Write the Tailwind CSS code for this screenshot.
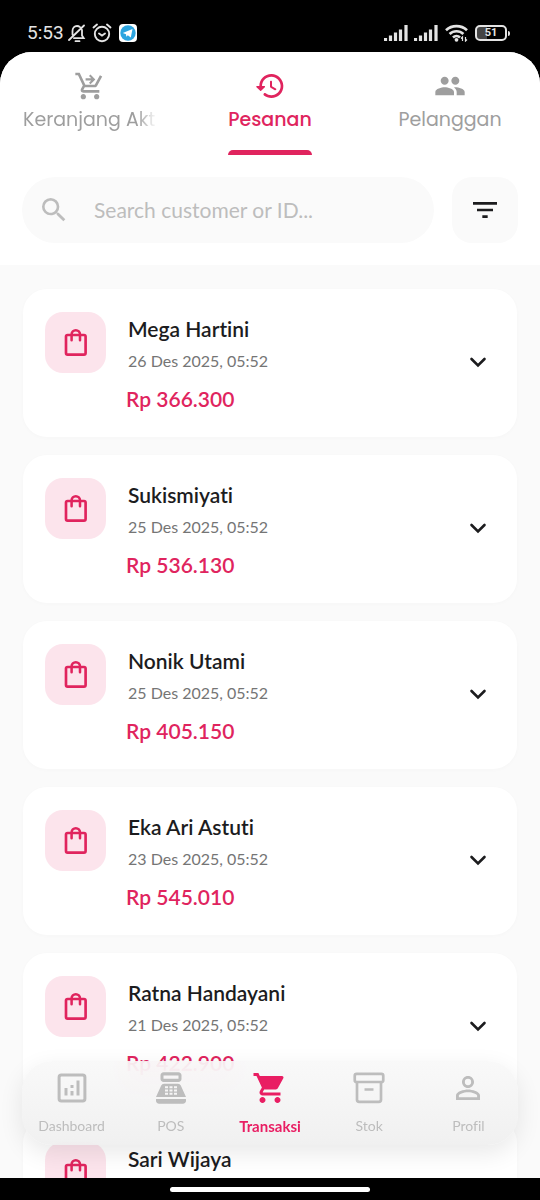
<!DOCTYPE html>
<html lang="id">
<head>
<meta charset="utf-8">
<meta name="viewport" content="width=device-width, initial-scale=1">
<title>Pesanan</title>
<script src="https://cdn.jsdelivr.net/npm/@tailwindcss/browser@4"></script>
</head>
<body class="flex h-screen flex-col bg-black font-['Lato',sans-serif] text-[#1c1c1e] [font-variant-ligatures:none]">

<!-- Icon library -->
<svg class="hidden" aria-hidden="true">
  <symbol id="i-bag" viewBox="0 0 24 24"><rect x="4.500" y="6" width="14.700" height="14.700" rx="1.200" fill="none" stroke="currentColor" stroke-width="2"/><path d="M8.700 10V5.600a3.150 3.150 0 0 1 6.300 0V10" fill="none" stroke="currentColor" stroke-width="1.900" stroke-linecap="round"/></symbol>
  <symbol id="i-chevron" viewBox="0 0 24 24"><path d="M5.500 9l6.500 6.500L18.500 9" fill="none" stroke="currentColor" stroke-width="2.600" stroke-linecap="round"/></symbol>
  <symbol id="i-signal" viewBox="0 0 24 16"><path d="M1.500 16v-3M6.500 16v-5.500M11.500 16V7.500M16.500 16V4.500M22 16V0" stroke="currentColor" stroke-width="3.200" fill="none"/></symbol>
</svg>

<!-- Status bar -->
<div class="flex h-[52px] shrink-0 items-center justify-between pt-[14px] pr-[30px] pl-[27px] text-[#e4e4e4]">
  <div class="flex items-center gap-1">
    <span class="font-['Roboto',sans-serif] text-[19px] leading-6">5:53</span>
    <svg class="size-[18px]" viewBox="0 0 18 18" fill="none" stroke="currentColor" stroke-width="1.800" stroke-linecap="round"><path d="M1 16L16 1.500M4.500 10.500V7c0-3 1.900-5 4.500-5 1.300 0 2.200.4 3 1.100M14 6v5.500l1.700 2.700H6M7.500 17.200h4"/></svg>
    <svg class="ml-[2px] size-5" viewBox="0 0 20 20" fill="none" stroke="currentColor" stroke-width="1.900" stroke-linecap="round"><circle cx="10" cy="11" r="7.200"/><path d="M1.500 4.500L5 1.500M18.500 4.500L15 1.500M7 10.500l3 2 3-2"/></svg>
    <svg class="ml-[3px] size-[18px]" viewBox="0 0 18 18"><rect width="18" height="18" rx="4" fill="#fff"/><circle cx="9" cy="9" r="7.700" fill="#2ca5e0"/><path d="M3.800 9l9.700-3.900-1.700 8.400-3-2.200-1.500 1.400-.3-2.500z" fill="#fff"/></svg>
  </div>
  <div class="flex items-center">
    <svg class="h-4 w-6"><use href="#i-signal"/></svg>
    <svg class="ml-[6px] h-4 w-6"><use href="#i-signal"/></svg>
    <svg class="ml-[7px] h-[18px] w-6" viewBox="0 0 24 18"><path d="M1 6.200a15.500 15.500 0 0 1 21 0M4.600 10a10 10 0 0 1 13.800 0M8 13.400a5.200 5.200 0 0 1 7 0" fill="none" stroke="currentColor" stroke-width="2.700"/><circle cx="11.500" cy="15.800" r="1.900" fill="currentColor"/><path d="M17.500 17v-4l-1.500 1.500M20.500 13v4l1.500-1.500" fill="none" stroke="currentColor" stroke-width="1.200"/></svg>
    <div class="ml-[6px] flex h-4 w-8 items-center justify-center rounded-[5px] border-2 border-current bg-linear-to-r from-[#444] from-35% to-black to-35% font-['Roboto',sans-serif] text-[11px] font-bold">51</div>
    <div class="ml-px h-[5px] w-[2px] rounded-r bg-current"></div>
  </div>
</div>

<div class="relative flex min-h-0 flex-1 flex-col overflow-hidden rounded-t-[32px] bg-[#fafafa]">

  <header class="shrink-0 bg-white pb-[22px]">
    <nav class="grid grid-cols-3 font-['Poppins','Inter',sans-serif] text-[19px] leading-7 text-[#9e9e9e]">
      <a href="#keranjang" class="flex h-[103px] flex-col items-center pt-[18px]">
        <svg class="size-8" viewBox="0 0 24 24" fill="currentColor"><path d="M11.250 9.600l1.100 1.100L16 7.050 12.350 3.400l-1.100 1.100 1.700 1.750H8.700v1.600h4.250zM7 18c-1.100 0-1.990.9-1.990 2S5.900 22 7 22s2-.9 2-2-.9-2-2-2zm10 0c-1.100 0-1.990.9-1.990 2s.89 2 1.990 2 2-.9 2-2-.9-2-2-2zm-1.450-5c.75 0 1.410-.41 1.750-1.030l3.860-7.010L19.420 4l-3.870 7H8.530L4.270 2H1v2h2l3.600 7.590-1.350 2.440C4.520 15.370 5.480 17 7 17h12v-2H7l1.100-2h7.450z"/></svg>
        <span class="mt-1 w-[134px] overflow-hidden mask-r-from-85% mask-r-to-100% whitespace-nowrap">Keranjang Aktif</span>
      </a>
      <a href="#pesanan" aria-current="page" class="flex h-[103px] flex-col items-center pt-[18px] text-[#e0245e]">
        <svg class="size-8" viewBox="0 0 24 24" fill="currentColor"><path d="M13.260 3C8.170 2.860 4 6.950 4 12H2.210c-.45 0-.67.540-.35.850l2.790 2.800c.2.200.51.200.71 0l2.790-2.800c.31-.31.090-.85-.36-.85H6c0-3.900 3.180-7.050 7.100-7 3.720.050 6.850 3.180 6.900 6.900.050 3.910-3.100 7.100-7 7.100-1.610 0-3.100-.55-4.280-1.480-.4-.31-.96-.28-1.320.080-.42.420-.39 1.130.080 1.490C9 20.290 10.910 21 13 21c5.050 0 9.140-4.170 9-9.260-.13-4.690-4.050-8.610-8.740-8.740zM12.750 8c-.41 0-.75.340-.75.750v3.680c0 .35.190.68.490.860l3.120 1.850c.36.210.82.090 1.030-.26.210-.36.090-.82-.26-1.030l-2.880-1.710v-3.400c0-.4-.34-.74-.75-.74z"/></svg>
        <span class="mt-1 font-medium">Pesanan</span>
        <span class="mt-auto h-[5px] w-[84px] rounded-t-full bg-current"></span>
      </a>
      <a href="#pelanggan" class="flex h-[103px] flex-col items-center pt-[18px]">
        <svg class="size-8" viewBox="0 0 24 24" fill="currentColor"><path d="M16 11c1.660 0 2.990-1.340 2.990-3S17.660 5 16 5s-3 1.340-3 3 1.340 3 3 3zm-8 0c1.660 0 2.990-1.340 2.990-3S9.660 5 8 5 5 6.340 5 8s1.340 3 3 3zm0 2c-2.330 0-7 1.170-7 3.500V19h14v-2.500c0-2.330-4.670-3.500-7-3.500zm8 0c-.29 0-.62.020-.97.050 1.160.840 1.970 1.970 1.970 3.450V19h6v-2.500c0-2.330-4.670-3.500-7-3.500z"/></svg>
        <span class="mt-1">Pelanggan</span>
      </a>
    </nav>
    <form class="mx-[22px] mt-[22px] flex gap-[18px]">
      <label class="flex h-[66px] flex-1 items-center rounded-full bg-[#fafafa] pl-4 text-[#bdbdbd]">
        <svg class="size-8 shrink-0" viewBox="0 0 24 24" fill="currentColor"><path d="M15.500 14h-.79l-.28-.27A6.471 6.471 0 0 0 16 9.500 6.500 6.500 0 1 0 9.500 16c1.610 0 3.090-.59 4.230-1.570l.27.280v.79l5 4.990L20.490 19l-4.990-5zm-6 0C7.010 14 5 11.990 5 9.500S7.010 5 9.500 5 14 7.010 14 9.500 11.990 14 9.500 14z"/></svg>
        <input type="search" aria-label="Search customer or ID" placeholder="Search customer or ID..." class="ml-6 min-w-0 flex-1 bg-transparent text-[21px] outline-none placeholder:text-[#bdbdbd]">
      </label>
      <button type="button" aria-label="Filter" class="flex h-[66px] w-[66px] items-center justify-center rounded-[20px] bg-[#fafafa]">
        <svg class="size-8" viewBox="0 0 24 24" fill="currentColor"><path d="M10 18h4v-2h-4v2zM3 6v2h18V6H3zm3 7h12v-2H6v2z"/></svg>
      </button>
    </form>
  </header>

  <main id="orders" class="flex min-h-0 flex-1 flex-col gap-[18px] overflow-hidden px-[23px] pt-6"></main>

  <!-- Floating bottom navigation -->
  <nav class="absolute inset-x-[22px] bottom-[33px] grid h-[84px] grid-cols-5 rounded-[30px] bg-linear-to-b from-[#f8f8f8]/85 to-[#eeeeee]/85 text-[14px] leading-5 text-[#bdbdbd] shadow-[0_8px_24px_rgba(0,0,0,0.09)] backdrop-blur-lg">
    <a href="#dashboard" class="flex flex-col items-center pt-[9px]">
      <svg class="size-9" viewBox="0 0 24 24" fill="none" stroke="currentColor" stroke-width="2"><rect x="3.400" y="3.400" width="17.200" height="17.200" rx="1.500"/><path d="M8 17v-5M12 17v-3M12 12v-2M16 17V7"/></svg>
      <span class="mt-[10px]">Dashboard</span>
    </a>
    <a href="#pos" class="flex flex-col items-center pt-[9px]">
      <svg class="size-9" viewBox="0 0 24 24" fill="currentColor"><path fill-rule="evenodd" d="M17 1.500H7c-1.100 0-2 .9-2 2V6c0 1.100.9 2 2 2h10c1.100 0 2-.9 2-2V3.500c0-1.100-.9-2-2-2zm0 4.300H7V3.600h10v2.200zm3 16.700H4c-1.100 0-2-.9-2-2v-1.200h20v1.200c0 1.100-.9 2-2 2zM18.530 10.400A2 2 0 0 0 16.700 9.200H7.300a2 2 0 0 0-1.830 1.200L2 18h20zM8 10.800h2v1.300H8zm3 0h2v1.300h-2zm3 0h2v1.300h-2zm-6 2.200h2v1.300H8zm3 0h2v1.300h-2zm3 0h2v1.300h-2zm-6 2.200h2v1.300H8zm3 0h2v1.300h-2zm3 0h2v1.300h-2z"/></svg>
      <span class="mt-[10px]">POS</span>
    </a>
    <a href="#transaksi" aria-current="page" class="flex flex-col items-center pt-[9px] text-[#e91e63]">
      <svg class="size-9" viewBox="0 0 24 24" fill="currentColor"><path d="M7 18c-1.100 0-1.990.9-1.990 2S5.900 22 7 22s2-.9 2-2-.9-2-2-2zM1 2v2h2l3.600 7.590-1.350 2.450c-.16.280-.25.610-.25.960 0 1.100.9 2 2 2h12v-2H7.420c-.14 0-.25-.11-.25-.25l.030-.12.900-1.630h7.450c.75 0 1.410-.41 1.750-1.030l3.580-6.490A1 1 0 0 0 20 4H5.210l-.94-2H1zm16 16c-1.100 0-1.990.9-1.990 2s.89 2 1.990 2 2-.9 2-2-.9-2-2-2z"/></svg>
      <span class="mt-[10px] text-[15px] font-bold">Transaksi</span>
    </a>
    <a href="#stok" class="flex flex-col items-center pt-[9px]">
      <svg class="size-9" viewBox="0 0 24 24" fill="none" stroke="currentColor" stroke-width="1.800"><rect x="2.500" y="2.600" width="19" height="5.400" rx="1.200"/><path d="M4 8v11.800c0 .8.700 1.400 1.500 1.400h13c.8 0 1.500-.6 1.500-1.400V8M9 13h6"/></svg>
      <span class="mt-[10px]">Stok</span>
    </a>
    <a href="#profil" class="flex flex-col items-center pt-[9px]">
      <svg class="size-9" viewBox="0 0 24 24" fill="currentColor"><path d="M12 5.900a2.100 2.100 0 1 1 0 4.200 2.100 2.100 0 0 1 0-4.200m0 9c2.970 0 6.100 1.460 6.100 2.100v1.100H5.900V17c0-.64 3.130-2.100 6.100-2.100M12 4C9.790 4 8 5.790 8 8s1.790 4 4 4 4-1.790 4-4-1.790-4-4-4zm0 9c-2.670 0-8 1.340-8 4v3h16v-3c0-2.660-5.330-4-8-4z"/></svg>
      <span class="mt-[10px]">Profil</span>
    </a>
  </nav>
</div>

<!-- Gesture bar -->
<div class="flex h-[22px] shrink-0 items-center justify-center"><div class="h-[5px] w-[200px] rounded-full bg-white"></div></div>

<template id="order-card">
  <article class="flex h-[148px] shrink-0 rounded-[24px] bg-white px-[22px] pt-[23px] shadow-[0_1px_4px_rgba(0,0,0,0.02)]">
    <div class="flex size-[61px] items-center justify-center rounded-[18px] bg-[#fce4ec] text-[#e0245e]"><svg class="size-8"><use href="#i-bag"/></svg></div>
    <div class="-mt-px ml-5 flex-1">
      <h2 data-f="name" class="pl-[2px] text-[21px] leading-9 font-semibold"></h2>
      <p data-f="date" class="pl-[2px] text-[16px] leading-7 text-[#757575]"></p>
      <p data-f="price" class="mt-1 text-[21px] leading-10 font-semibold text-[#e0245e]"></p>
    </div>
    <button type="button" aria-label="Detail pesanan" class="mt-[38px] mr-[5px] size-6"><svg class="size-6"><use href="#i-chevron"/></svg></button>
  </article>
</template>
<script>
  const orders = [
    ["Mega Hartini", "26 Des 2025, 05:52", "Rp 366.300"],
    ["Sukismiyati", "25 Des 2025, 05:52", "Rp 536.130"],
    ["Nonik Utami", "25 Des 2025, 05:52", "Rp 405.150"],
    ["Eka Ari Astuti", "23 Des 2025, 05:52", "Rp 545.010"],
    ["Ratna Handayani", "21 Des 2025, 05:52", "Rp 422.900"],
    ["Sari Wijaya", "", ""]
  ];
  const tpl = document.getElementById("order-card");
  for (const [name, date, price] of orders) {
    const c = tpl.content.cloneNode(true);
    c.querySelector('[data-f="name"]').textContent = name;
    c.querySelector('[data-f="date"]').textContent = date;
    c.querySelector('[data-f="price"]').textContent = price;
    document.getElementById("orders").append(c);
  }
</script>
</body>
</html>
